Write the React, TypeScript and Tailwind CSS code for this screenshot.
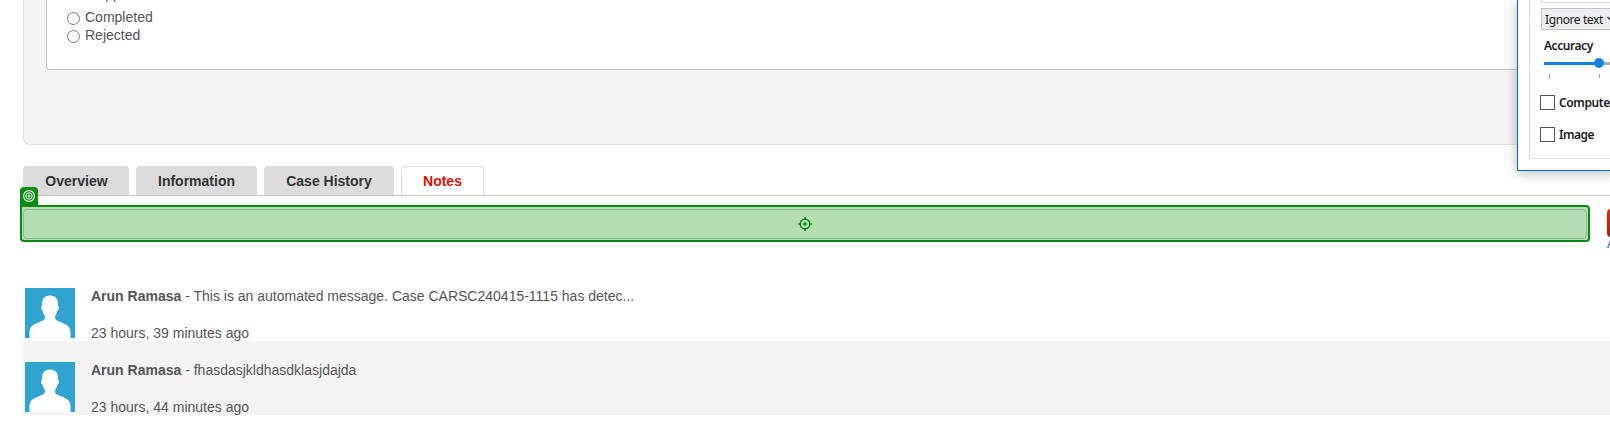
import type { ReactNode } from "react";

const tabs = [
  { label: "Overview", size: "w-[106px] pl-px", active: false },
  { label: "Information", size: "w-[121px]", active: false },
  { label: "Case History", size: "w-[130px]", active: false },
  { label: "Notes", size: "w-[83px]", active: true },
];

const notes = [
  {
    author: "Arun Ramasa",
    text: "This is an automated message. Case CARSC240415-1115 has detec...",
    time: "23 hours, 39 minutes ago",
  },
  { author: "Arun Ramasa", text: "fhasdasjkldhasdklasjdajda", time: "23 hours, 44 minutes ago" },
];

function Radio({ label }: { label: string }) {
  return (
    <label className="flex h-[18px] shrink-0 items-center whitespace-nowrap">
      <span className="mt-0.5 mr-[5px] h-[13px] w-[13px] rounded-full border border-[#767676] bg-white" />
      <span className="text-sm leading-[18px]">{label}</span>
    </label>
  );
}

function Avatar() {
  return (
    <svg width="50" height="50" viewBox="0 0 50 50" className="shrink-0">
      <rect width="50" height="50" fill="#31a3d1" />
      <path
        d="M4.5 50V44C4.5 38.5 8 36.8 13 34.7C17 33 19.7 32.3 19.9 30V28C18.8 26.7 18.2 25 17.8 23C16.6 22.7 15.9 20.2 16.2 18.8C16.3 18.2 16.7 18.1 17 18C16.5 11 19.5 7.5 25 7.5S33.5 11 33 18C33.5 18.1 33.8 18.4 33.8 19.2C33.9 20.7 33.3 22.7 32.2 23C31.8 25 31.2 26.7 30.1 28V30C30.3 32.3 33 33 37 34.7C42 36.8 45.5 38.5 45.5 44V50Z"
        fill="#fff"
      />
    </svg>
  );
}

function Check({ children }: { children: ReactNode }) {
  return (
    <div className="flex h-[15px] items-center whitespace-nowrap">
      <span className="mr-1 h-[15px] w-[15px] shrink-0 border border-[#555] bg-white" />
      <span className="font-semibold">{children}</span>
    </div>
  );
}

function OptionsWindow() {
  return (
    <aside className="absolute top-0 left-[1517px] h-[171px] w-[93px] overflow-hidden border-b border-l border-[#0068d9] bg-white pl-[11px] font-['Noto_Sans','Open_Sans',sans-serif] text-xs text-[#1a1a1a]">
      <div className="h-[159px] w-[200px] border-b border-l border-[#dcdcdc] pl-[10px]">
        <div className="ml-px h-[3px] border-b border-l border-[#dcdcdc]" />
        <div className="mt-[5px] ml-px flex h-[22px] items-center border border-[#c3c3c6] bg-[#ededf0] pt-0.5 pl-[3px] whitespace-nowrap">
          <span className="tracking-[-0.4px]">Ignore text</span>
          <svg width="8" height="6" viewBox="0 0 8 6" className="-mt-0.5 ml-1">
            <path d="M.5 1L4 4.5L7.5 1" fill="none" stroke="#333" strokeWidth="1.4" />
          </svg>
        </div>
        <div className="mt-[7px] ml-1 h-[18px] leading-[18px] font-semibold tracking-[-0.45px]">Accuracy</div>
        <svg width="68" height="26" viewBox="0 0 68 26" className="ml-1 block">
          <path d="M0 8.5H68" stroke="#a5afb7" strokeWidth="3" />
          <path d="M0 8.5H55" stroke="#1283e0" strokeWidth="3" />
          <circle cx="55" cy="8" r="5" fill="#1283e0" />
          <path d="M5.5 19V24M55.5 19V23" stroke="#a5a9ad" />
        </svg>
        <div className="mt-[14px] flex flex-col gap-[17px]">
          <Check>
            <span className="tracking-[-0.4px]">Computer Vision</span>
          </Check>
          <Check>
            <span className="tracking-[-0.5px]">Image</span>
          </Check>
        </div>
      </div>
    </aside>
  );
}

export default function App() {
  return (
    <div className="relative h-[428px] w-[1610px] overflow-hidden bg-white font-['Liberation_Sans',Arial,sans-serif] text-[#555]">
      <section className="ml-[23px] h-[145px] rounded-bl-[7px] border-b border-l border-[#dfdfdf] bg-[#f4f4f4] pl-[22px]">
        <div className="flex h-[70px] flex-col justify-end overflow-hidden rounded-bl-[4px] border-b border-l border-[#c4c4c4] bg-white pb-[25px] pl-5">
          <div className="mb-[5px] shrink-0 pl-[18px] text-sm leading-[18px]">Shipped</div>
          <Radio label="Completed" />
          <Radio label="Rejected" />
        </div>
      </section>

      <nav className="mt-[21px] ml-[23px] flex h-[30px] gap-[7px] border-b border-[#c4c4c4]">
        {tabs.map((tab) => (
          <div
            key={tab.label}
            className={`${tab.size} h-[29px] rounded-t-[4px] text-center text-sm font-bold ${
              tab.active
                ? "border border-b-0 border-[#dcdcdc] bg-white leading-[28px] text-[#d81505]"
                : "bg-[#dcdcdc] leading-[30px] text-[#333]"
            }`}
          >
            {tab.label}
          </div>
        ))}
      </nav>

      <div className="mt-[9px] flex">
        <div className="relative ml-5 h-[37px] w-[1570px] rounded-[4px] rounded-tl-none border-2 border-[#078b0e] bg-[#b5deb5] px-px pt-0.5 pb-px">
          <div className="flex h-full items-center justify-center rounded-[4px] border border-[#91b692]">
            <svg width="14" height="14" viewBox="0 0 14 14" fill="none" stroke="#078b0e">
              <circle cx="7" cy="7" r="4.8" strokeWidth="1.5" />
              <circle cx="7" cy="7" r="1.8" fill="#078b0e" stroke="none" />
              <path d="M7 0V3M7 11V14M0 7H3M11 7H14" strokeWidth="1.6" />
            </svg>
          </div>
          <div className="absolute -top-5 -left-0.5 flex h-[20px] w-[18px] justify-center rounded-t-[4px] bg-[#078b0e] pt-[3px]">
            <svg width="12" height="12" viewBox="0 0 12 12" fill="none" stroke="#fff">
              <circle cx="6" cy="6" r="5.4" strokeWidth="1.1" />
              <circle cx="6" cy="6" r="3.2" strokeWidth="1" />
              <circle cx="6" cy="6" r="1.1" strokeWidth=".9" />
            </svg>
          </div>
        </div>
        <div className="ml-[17px] h-[55px] w-[3px] overflow-hidden pt-1">
          <div className="h-[28px] w-10 rounded-[4px] bg-linear-to-b from-[#ee2a08] to-[#b51604]" />
          <div className="text-xs leading-[14px] text-[#1a5cd6]">Add</div>
        </div>
      </div>

      <ul className="mt-[7px] ml-[23px]">
        {notes.map((note) => (
          <li key={note.time} className="flex h-[74px] pt-[21px] pl-0.5 text-sm even:bg-[#f4f4f4]">
            <Avatar />
            <div className="ml-4 leading-[18px]">
              <p className="-mt-px">
                <b>{note.author}</b> - {note.text}
              </p>
              <p className="mt-[19px]">{note.time}</p>
            </div>
          </li>
        ))}
      </ul>
      <div className="absolute top-0 left-[1517px] h-[171px] w-[100px] shadow-[0_2px_12px_rgba(0,0,0,0.28)]" />
      <OptionsWindow />
    </div>
  );
}
